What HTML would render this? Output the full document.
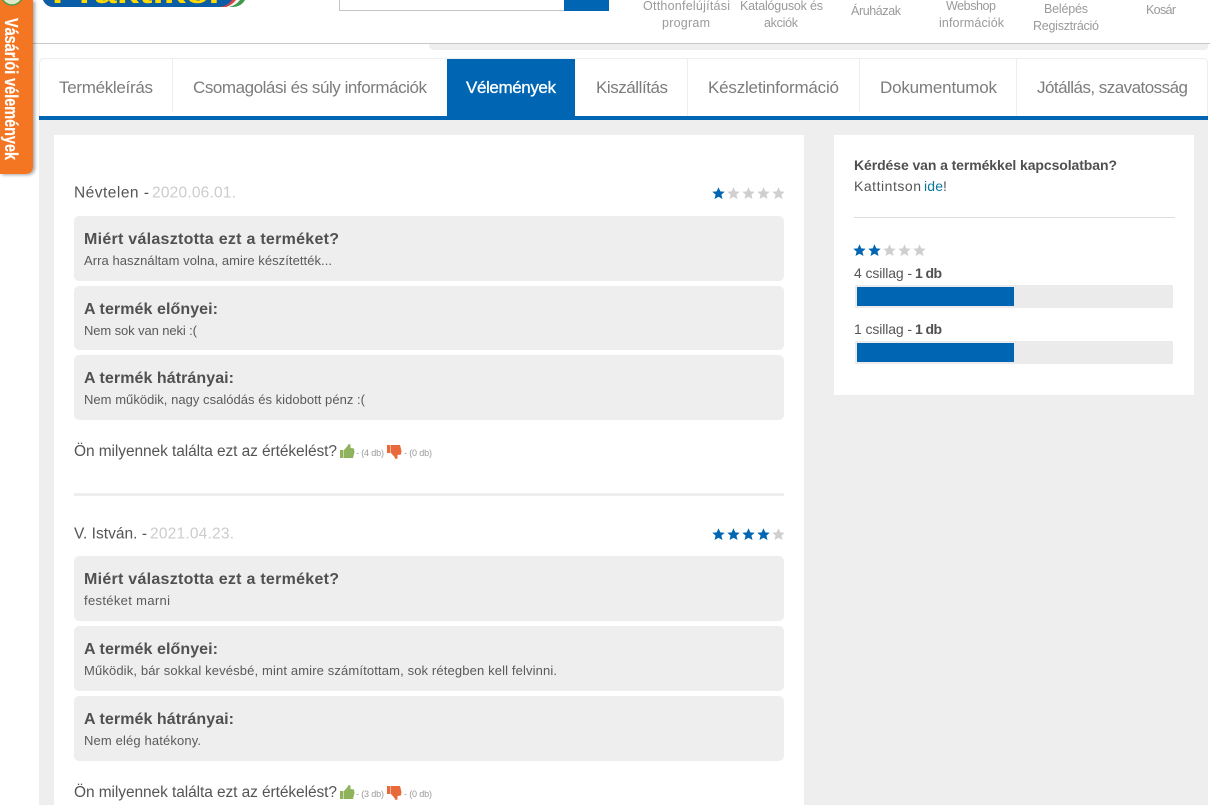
<!DOCTYPE html>
<html lang="hu"><head><meta charset="utf-8"><title>Vélemények</title>
<style>
html,body{margin:0;padding:0;width:1210px;height:805px;overflow:hidden;background:#fff}
svg{display:block}
text{font-family:"Liberation Sans",sans-serif;white-space:pre}
.h{font-size:12.5px;fill:#9a9a9a}
.t{font-size:17px;fill:#7c7c7c}
.n{font-size:15.5px;fill:#555}
.d{font-size:15.5px;fill:#ccc}
.b{font-size:16px;font-weight:bold;fill:#505050}
.p{font-size:13px;fill:#5a5a5a}
.s{font-size:9px;fill:#999}
.r{font-size:14px;fill:#555}
.rb{font-size:14px;font-weight:bold;fill:#505050}
</style></head><body>
<svg width="1210" height="805" viewBox="0 0 1210 805" xmlns="http://www.w3.org/2000/svg">
<defs>
<polygon id="st" points="0,-6.3 1.8,-2.1 6.2,-1.8 2.9,1.1 4,5.5 0,3.2 -4,5.5 -2.9,1.1 -6.2,-1.8 -1.8,-2.1"/>
<g id="up"><rect x="0" y="6" width="3.5" height="8" fill="#8fb35c"/><path d="M4 6 L7.500 2 L8.500 0 L10.500 .5 L10.500 4 L14 4.500 L14.500 8 L13 14 L4 14Z" fill="#8fb35c"/></g>
<g id="dn"><rect x="0" y="0" width="3.500" height="8" fill="#e8693a"/><path d="M4 8 L7.500 12 L8.500 14 L10.500 13.500 L10.500 10 L14 9.500 L14.500 6 L13 0 L4 0Z" fill="#e8693a"/></g>
<filter id="sh" x="-20%" y="-5%" width="140%" height="110%"><feDropShadow dx="2" dy="1" stdDeviation="1.5" flood-color="#000" flood-opacity=".35"/></filter>
</defs>

<!-- page background -->
<rect x="39" y="120" width="1169" height="685" fill="#eeeeee"/>

<!-- header -->
<rect x="32" y="43" width="1178" height="1" fill="#c8c8c8"/>
<path d="M429 44H1210V44L1208 44V46Q1208 50 1204 50H435Q429 50 429 44Z" fill="#eeeeee"/>

<!-- logo -->
<path d="M245 0Q241 7 232 7H54C48 7 45 4 43 0Z" fill="#3f9a4a"/>
<path d="M240 0Q236 5.500 229 7H54C48 7 45 4 43 0Z" fill="#f3f3f3"/>
<path d="M236 0Q232 5 226 7H54C48 7 45 4 43 0Z" fill="#d8433f"/>
<path d="M232 0Q228 6 220 7H54C48 7 45 4 43 0Z" fill="#0a5ea8"/>
<text x="52" y="3" font-weight="bold" fill="#ffd800" textLength="172" lengthAdjust="spacingAndGlyphs" style="font-size:30px">Praktiker</text>

<!-- search -->
<path d="M339.500 0V10.500H565" fill="#fff" stroke="#c4c4c4"/>
<rect x="564" y="0" width="45" height="11" fill="#0066b3"/>

<!-- header links -->
<text class="h" x="643" y="10" textLength="87">Otthonfelújítási</text>
<text class="h" x="662" y="27" textLength="48">program</text>
<text class="h" x="740" y="10" textLength="83">Katalógusok és</text>
<text class="h" x="764" y="27" textLength="34">akciók</text>
<text class="h" x="851" y="15" textLength="50">Áruházak</text>
<text class="h" x="946" y="10" textLength="50">Webshop</text>
<text class="h" x="939" y="27" textLength="65">információk</text>
<text class="h" x="1044" y="13" textLength="44">Belépés</text>
<text class="h" x="1033" y="30" textLength="66">Regisztráció</text>
<text class="h" x="1146" y="14" textLength="30">Kosár</text>

<!-- orange side tab -->
<path d="M0 0H33V166Q33 174 25 174H0Z" fill="#f47521" filter="url(#sh)"/>
<circle cx="12" cy="-6" r="11" fill="#dfe8c8" stroke="#4f9a45" stroke-width="1.500"/>
<text transform="translate(5 18) rotate(90)" font-weight="bold" fill="#fff" stroke="#fff" stroke-width=".2" textLength="142" lengthAdjust="spacingAndGlyphs" style="font-size:18px">Vásárlói vélemények</text>

<!-- tabs -->
<path d="M39.500 116V64Q39.500 58.500 45 58.500H1203Q1207.500 58.500 1207.500 63V116" fill="#fff" stroke="#eeeeee"/>
<g fill="#eeeeee">
<rect x="172" y="59" width="1" height="53"/>
<rect x="687" y="59" width="1" height="57"/>
<rect x="859" y="59" width="1" height="53"/>
<rect x="1016" y="59" width="1" height="57"/>
</g>
<rect x="447" y="59" width="128" height="58" fill="#0066b3"/>
<rect x="39" y="116" width="1169" height="4" fill="#0066b3"/>
<text class="t" x="59" y="93" textLength="94">Termékleírás</text>
<text class="t" x="193" y="93" textLength="234">Csomagolási és súly információk</text>
<text class="t" x="466" y="93" textLength="90" style="fill:#fff;stroke:#fff;stroke-width:.3px">Vélemények</text>
<text class="t" x="596" y="93" textLength="72">Kiszállítás</text>
<text class="t" x="708" y="93" textLength="131">Készletinformáció</text>
<text class="t" x="880" y="93" textLength="117">Dokumentumok</text>
<text class="t" x="1037" y="93" textLength="151">Jótállás, szavatosság</text>

<!-- main panel -->
<rect x="54" y="135" width="750" height="670" fill="#fff"/>

<!-- review 1 -->
<text class="n" x="74" y="197.500" textLength="75">Névtelen -</text>
<text class="d" x="152" y="197.500" textLength="84">2020.06.01.</text>
<use href="#st" x="718.500" y="193.500" fill="#0066b3"/>
<use href="#st" x="733.500" y="193.500" fill="#cfcfcf"/>
<use href="#st" x="748.500" y="193.500" fill="#cfcfcf"/>
<use href="#st" x="763.500" y="193.500" fill="#cfcfcf"/>
<use href="#st" x="778.500" y="193.500" fill="#cfcfcf"/>
<rect x="74" y="216" width="710" height="65" rx="5" fill="#eeeeee"/>
<rect x="74" y="286" width="710" height="64" rx="5" fill="#eeeeee"/>
<rect x="74" y="355" width="710" height="65" rx="5" fill="#eeeeee"/>
<text class="b" x="84" y="244" textLength="255">Miért választotta ezt a terméket?</text>
<text class="p" x="84" y="265" textLength="248">Arra használtam volna, amire készítették...</text>
<text class="b" x="84" y="314" textLength="134">A termék előnyei:</text>
<text class="p" x="84" y="335" textLength="113">Nem sok van neki :(</text>
<text class="b" x="84" y="383" textLength="150">A termék hátrányai:</text>
<text class="p" x="84" y="404" textLength="281">Nem működik, nagy csalódás és kidobott pénz :(</text>
<text class="n" x="74" y="456" textLength="263">Ön milyennek találta ezt az értékelést?</text>
<use href="#up" x="340" y="444"/>
<text class="s" x="356" y="456" textLength="28">- (4 db)</text>
<use href="#dn" x="387" y="445"/>
<text class="s" x="404" y="456" textLength="28">- (0 db)</text>
<rect x="74" y="493" width="710" height="3" fill="#eeeeee"/>

<!-- review 2 -->
<text class="n" x="74" y="538.500" textLength="73">V. István. -</text>
<text class="d" x="150" y="538.500" textLength="84">2021.04.23.</text>
<use href="#st" x="718.500" y="534.500" fill="#0066b3"/>
<use href="#st" x="733.500" y="534.500" fill="#0066b3"/>
<use href="#st" x="748.500" y="534.500" fill="#0066b3"/>
<use href="#st" x="763.500" y="534.500" fill="#0066b3"/>
<use href="#st" x="778.500" y="534.500" fill="#cfcfcf"/>
<rect x="74" y="556" width="710" height="65" rx="5" fill="#eeeeee"/>
<rect x="74" y="626" width="710" height="65" rx="5" fill="#eeeeee"/>
<rect x="74" y="696" width="710" height="65" rx="5" fill="#eeeeee"/>
<text class="b" x="84" y="584" textLength="255">Miért választotta ezt a terméket?</text>
<text class="p" x="84" y="605" textLength="86">festéket marni</text>
<text class="b" x="84" y="654" textLength="134">A termék előnyei:</text>
<text class="p" x="84" y="675" textLength="473">Működik, bár sokkal kevésbé, mint amire számítottam, sok rétegben kell felvinni.</text>
<text class="b" x="84" y="724" textLength="150">A termék hátrányai:</text>
<text class="p" x="84" y="745" textLength="117">Nem elég hatékony.</text>
<text class="n" x="74" y="797" textLength="263">Ön milyennek találta ezt az értékelést?</text>
<use href="#up" x="340" y="785"/>
<text class="s" x="356" y="797" textLength="28">- (3 db)</text>
<use href="#dn" x="387" y="786"/>
<text class="s" x="404" y="797" textLength="28">- (0 db)</text>

<!-- side panel -->
<rect x="834" y="135" width="360" height="260" fill="#fff"/>
<text class="rb" x="854" y="170" textLength="263">Kérdése van a termékkel kapcsolatban?</text>
<text class="r" x="854" y="191" textLength="67">Kattintson</text>
<text class="r" x="924" y="191" textLength="19" style="fill:#0a7a9c">ide</text>
<text class="r" x="943" y="191">!</text>
<rect x="854" y="217" width="321" height="1" fill="#dddddd"/>
<use href="#st" x="859.500" y="250.500" fill="#0066b3"/>
<use href="#st" x="874.500" y="250.500" fill="#0066b3"/>
<use href="#st" x="889.500" y="250.500" fill="#cfcfcf"/>
<use href="#st" x="904.500" y="250.500" fill="#cfcfcf"/>
<use href="#st" x="919.500" y="250.500" fill="#cfcfcf"/>
<text class="r" x="854" y="278" textLength="58">4 csillag -</text>
<text class="rb" x="915" y="278" textLength="27">1 db</text>
<rect x="855" y="285" width="318" height="23" fill="#ebebeb"/>
<rect x="857" y="287" width="157" height="19" fill="#0066b3"/>
<text class="r" x="854" y="334" textLength="58">1 csillag -</text>
<text class="rb" x="915" y="334" textLength="27">1 db</text>
<rect x="855" y="341" width="318" height="23" fill="#ebebeb"/>
<rect x="857" y="343" width="157" height="19" fill="#0066b3"/>
</svg>
</body></html>
